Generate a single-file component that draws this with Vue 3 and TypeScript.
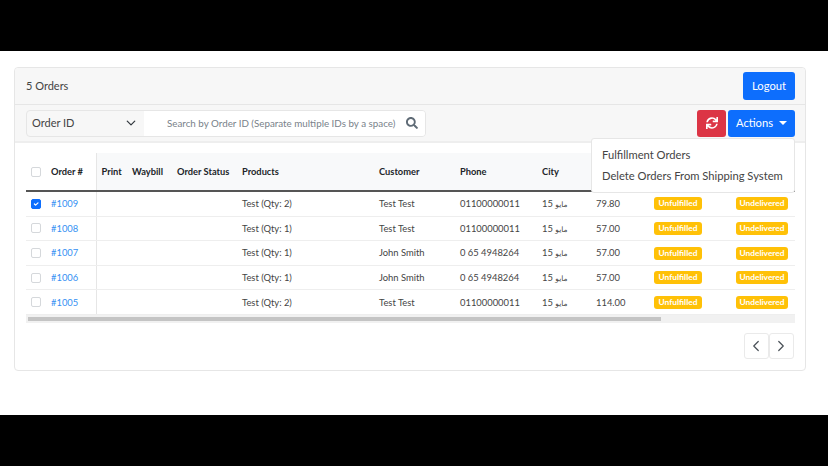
<script setup lang="ts">
import { ref } from 'vue'

interface Order {
    id: number
    product: string
    customer: string
    phone: string
    total: string
}

// the last three headers sit behind the open menu
const columns = [
    { label: '', width: '20px' },
    { label: 'Order #', width: '50px' },
    { label: 'Print', width: '31px' },
    { label: 'Waybill', width: '45px' },
    { label: 'Order Status', width: '65px' },
    { label: 'Products', width: '137px' },
    { label: 'Customer', width: '81px' },
    { label: 'Phone', width: '82px' },
    { label: 'City', width: '54px' },
    { label: '', width: '58px' },
    { label: '', width: '82px' },
    { label: '', width: '64px' }
]

const orders: Order[] = [
    { id: 1009, product: 'Test (Qty: 2)', customer: 'Test Test', phone: '01100000011', total: '79.80' },
    { id: 1008, product: 'Test (Qty: 1)', customer: 'Test Test', phone: '01100000011', total: '57.00' },
    { id: 1007, product: 'Test (Qty: 1)', customer: 'John Smith', phone: '0 65 4948264', total: '57.00' },
    { id: 1006, product: 'Test (Qty: 1)', customer: 'John Smith', phone: '0 65 4948264', total: '57.00' },
    { id: 1005, product: 'Test (Qty: 2)', customer: 'Test Test', phone: '01100000011', total: '114.00' }
]

const selected = ref<number[]>([1009])
</script>

<template>
    <div class="stage">
        <div class="bar"></div>
        <main class="page">
            <section class="card">
                <header class="card-head">
                    <span class="title">5 Orders</span>
                    <button class="btn primary logout">Logout</button>
                </header>
                <div class="toolbar">
                    <div class="search">
                        <div class="select">
                            <span class="title">Order ID</span>
                            <svg width="10" height="10" viewBox="0 0 16 16" fill="none" stroke="#343a40" stroke-width="2" stroke-linecap="round" stroke-linejoin="round"><path d="M2 5l6 6 6-6" /></svg>
                        </div>
                        <div class="query">
                            <input placeholder="Search by Order ID (Separate multiple IDs by a space)" />
                            <svg width="12" height="12" viewBox="0 0 512 512" fill="#5f6b76"><path d="M505 442.7L405.3 343c-4.5-4.5-10.6-7-17-7H372c27.6-35.3 44-79.7 44-128C416 93.1 322.9 0 208 0S0 93.1 0 208s93.1 208 208 208c48.3 0 92.7-16.4 128-44v16.3c0 6.4 2.5 12.5 7 17l99.7 99.7c9.4 9.4 24.6 9.4 33.9 0l28.3-28.3c9.4-9.4 9.4-24.6.1-34zM208 336c-70.7 0-128-57.2-128-128 0-70.7 57.2-128 128-128 70.7 0 128 57.2 128 128 0 70.7-57.2 128-128 128z" /></svg>
                        </div>
                    </div>
                    <div class="actions">
                        <button class="btn danger">
                            <svg width="12" height="12" viewBox="0 0 512 512" fill="#fff"><path d="M440.65 12.57l4 82.77A247.16 247.16 0 0 0 255.83 8C134.73 8 33.91 94.92 12.29 209.82A12 12 0 0 0 24.09 224h49.05a12 12 0 0 0 11.67-9.26 175.91 175.91 0 0 1 317-56.94l-101.46-4.86a12 12 0 0 0-12.57 12v47.41a12 12 0 0 0 12 12H500a12 12 0 0 0 12-12V12a12 12 0 0 0-12-12h-47.37a12 12 0 0 0-11.98 12.57zM255.83 432a175.61 175.61 0 0 1-146-77.8l101.8 4.87a12 12 0 0 0 12.57-12v-47.4a12 12 0 0 0-12-12H12a12 12 0 0 0-12 12V500a12 12 0 0 0 12 12h47.35a12 12 0 0 0 12-12.6l-4.15-82.57A247.17 247.17 0 0 0 255.83 504c121.11 0 221.93-86.92 243.55-201.82a12 12 0 0 0-11.8-14.18h-49.05a12 12 0 0 0-11.67 9.26A175.86 175.86 0 0 1 255.83 432z" /></svg>
                        </button>
                        <button class="btn primary dropdown-toggle"><span class="title">Actions</span> <i class="caret"></i></button>
                        <ul class="menu">
                            <li>Fulfillment Orders</li>
                            <li>Delete Orders From Shipping System</li>
                        </ul>
                    </div>
                </div>
                <div class="card-body">
                    <table>
                        <colgroup>
                            <col v-for="(col, i) in columns" :key="i" :style="{ width: col.width }" />
                        </colgroup>
                        <thead>
                            <tr>
                                <th class="check"><input type="checkbox" /></th>
                                <th v-for="(col, i) in columns.slice(1)" :key="i" :class="{ sticky: i === 0 }">{{ col.label }}</th>
                            </tr>
                        </thead>
                        <tbody>
                            <tr v-for="order in orders" :key="order.id">
                                <td class="check"><input v-model="selected" type="checkbox" :value="order.id" /></td>
                                <td class="sticky"><a href="#">#{{ order.id }}</a></td>
                                <td></td>
                                <td></td>
                                <td></td>
                                <td>{{ order.product }}</td>
                                <td>{{ order.customer }}</td>
                                <td>{{ order.phone }}</td>
                                <td>15 <span class="month">مايو</span></td>
                                <td>{{ order.total }}</td>
                                <td><span class="badge fulfil">Unfulfilled</span></td>
                                <td><span class="badge">Undelivered</span></td>
                            </tr>
                        </tbody>
                    </table>
                    <div class="scrollbar"><div class="thumb"></div></div>
                    <nav class="pager">
                        <button>
                            <svg width="12" height="12" viewBox="0 0 16 16" fill="none" stroke="#495057" stroke-width="1.6" stroke-linecap="round" stroke-linejoin="round"><path d="M11 2L5 8l6 6" /></svg>
                        </button>
                        <button>
                            <svg width="12" height="12" viewBox="0 0 16 16" fill="none" stroke="#495057" stroke-width="1.6" stroke-linecap="round" stroke-linejoin="round"><path d="M5 2l6 6-6 6" /></svg>
                        </button>
                    </nav>
                </div>
            </section>
        </main>
        <div class="bar"></div>
    </div>
</template>

<style scoped>
.stage {
    display: flex;
    flex-direction: column;
    height: 466px;
    font-family: Lato, 'Noto Sans', 'DejaVu Sans', sans-serif;
    color: #495057;
}
.bar {
    height: 51px;
    flex: none;
    background: #000;
}
.page {
    flex: 1;
    padding: 16px 22px 0 14px;
    background: #fff;
}
.card {
    box-sizing: border-box;
    height: 304px;
    border: 1px solid #e6e6e6;
    border-radius: 4px;
}
.card-head {
    display: flex;
    align-items: center;
    justify-content: space-between;
    height: 36px;
    padding: 0 10px 0 11px;
    font-size: 11px;
    color: #444;
    background: #f7f7f7;
    border-bottom: 1px solid #e6e6e6;
    border-radius: 4px 4px 0 0;
}
.title {
    margin-bottom: 2px;
}
.btn {
    display: flex;
    align-items: center;
    justify-content: center;
    height: 27px;
    padding: 0;
    border: 0;
    border-radius: 3px;
    color: #fff;
    font: inherit;
    font-size: 11.2px;
}
.primary {
    background: #0d6efd;
}
.danger {
    width: 29px;
    background: #dc3545;
}
.logout {
    width: 52px;
    height: 28px;
    padding-bottom: 2px;
}
.toolbar {
    display: flex;
    align-items: center;
    justify-content: space-between;
    height: 36px;
    padding: 0 10px 0 11px;
    background: #f7f7f7;
    border-bottom: 2px solid #eee;
}
.search {
    display: flex;
    box-sizing: border-box;
    width: 400px;
    height: 27px;
    border: 1px solid #e6e6e6;
    border-radius: 4px;
    overflow: hidden;
}
.select {
    display: flex;
    align-items: center;
    justify-content: space-between;
    box-sizing: border-box;
    width: 117px;
    padding: 0 8px 0 5px;
    font-size: 11px;
    color: #444;
}
.query {
    display: flex;
    align-items: center;
    flex: 1;
    gap: 7px;
    padding: 0 7px 0 23px;
    background: #fff;
}
.query input {
    flex: 1;
    min-width: 0;
    padding: 0;
    border: 0;
    outline: 0;
    font: inherit;
    font-size: 9.8px;
}
.query input::placeholder {
    color: #79828a;
    opacity: 1;
}
.actions {
    position: relative;
    display: flex;
    gap: 2px;
}
.dropdown-toggle {
    width: 67px;
    gap: 6px;
}
.caret {
    width: 0;
    height: 0;
    border-top: 4px solid #fff;
    border-left: 4px solid transparent;
    border-right: 4px solid transparent;
}
.menu {
    position: absolute;
    z-index: 2;
    top: 28px;
    right: 0;
    width: 204px;
    height: 55px;
    margin: 0;
    padding: 5px 0 0;
    box-sizing: border-box;
    list-style: none;
    background: #fff;
    border: 1px solid #e6e6e6;
    border-radius: 3px;
    font-size: 11.2px;
    color: #444;
}
.menu li {
    height: 21.5px;
    padding-left: 10px;
    line-height: 21px;
    white-space: nowrap;
}
.card-body {
    padding: 10px 10px 0 11px;
}
table {
    width: 769px;
    table-layout: fixed;
    border-collapse: collapse;
    font-size: 9.4px;
    color: #444;
}
th {
    height: 37px;
    padding: 0 0 0 5px;
    text-align: left;
    font-weight: 700;
    font-size: 9.3px;
    color: #212529;
    white-space: nowrap;
    background: #f8f9fa;
    border-bottom: 2px solid #555;
}
td {
    height: 23.6px;
    padding: 0 0 0 5px;
    white-space: nowrap;
    border-bottom: 1px solid #eee;
}
.check,
th.sticky {
    background: #fff;
}
.check {
    padding-left: 5px;
    line-height: 0;
}
.sticky {
    border-right: 1px solid #e6e6e6;
}
.month {
    font-size: 7.5px;
}
input[type='checkbox'] {
    appearance: none;
    width: 10px;
    height: 10px;
    margin: 0;
    background: #fff;
    border: 1px solid #d5d8db;
    border-radius: 2px;
}
input[type='checkbox']:checked {
    border-color: #0d6efd;
    background: #0d6efd url("data:image/svg+xml,%3Csvg xmlns='http://www.w3.org/2000/svg' viewBox='0 0 20 20'%3E%3Cpath fill='none' stroke='%23fff' stroke-linecap='round' stroke-linejoin='round' stroke-width='3' d='M6 10l3 3 6-6'/%3E%3C/svg%3E") center / 100% no-repeat;
}
a {
    color: #3490f3;
    text-decoration: none;
}
.badge {
    display: inline-block;
    width: 52px;
    height: 13px;
    line-height: 13px;
    text-align: center;
    vertical-align: middle;
    font-size: 8.4px;
    font-weight: 700;
    color: #fff;
    background: #ffc107;
    border-radius: 3px;
}
.fulfil {
    width: 48px;
}
.scrollbar {
    display: flex;
    align-items: center;
    height: 8px;
    padding-left: 2px;
    background: #f1f1f1;
}
.thumb {
    width: 633px;
    height: 4px;
    background: #c4c4c4;
}
.pager {
    display: flex;
    justify-content: flex-end;
    gap: 0.5px;
    margin-top: 10px;
    padding-right: 1.5px;
}
.pager button {
    display: flex;
    align-items: center;
    justify-content: center;
    width: 24.5px;
    height: 26px;
    padding: 0;
    background: #fff;
    border: 1px solid #eaeaea;
    border-radius: 3px;
}
</style>
